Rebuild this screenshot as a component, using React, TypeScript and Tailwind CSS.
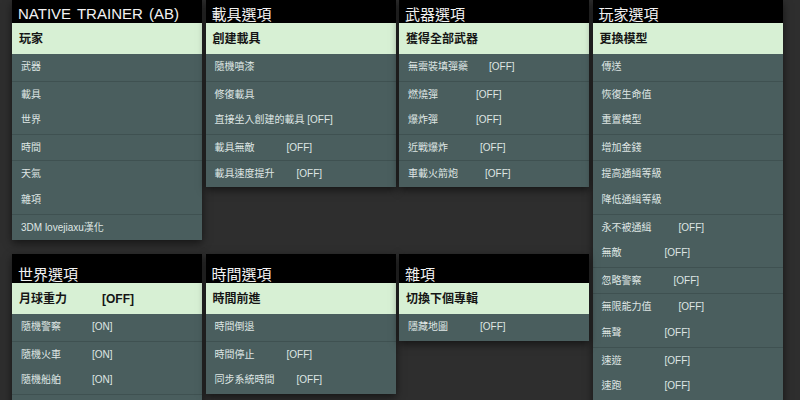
import React from "react";

type Item = {
  label: string;
  value?: string;
  w?: string; // ancho de la etiqueta antes del valor
  sep?: boolean; // línea tenue arriba
};

interface PanelProps {
  title: string;
  items: Item[];
  tall?: boolean; // cabecera de la fila de abajo
  latin?: boolean;
  className?: string;
}

const Panel: React.FC<PanelProps> = ({ title, items, tall, latin, className }) => {
  const [first, ...rest] = items;
  return (
    <div className={`w-[190px] bg-[#4a5e5e] shadow-[0_3px_8px_rgba(0,0,0,0.55)] ${className ?? ""}`}>
      {/* Cabecera */}
      <div className={`flex items-end bg-black pl-[6px] ${tall ? "h-[29px]" : "h-[23px]"}`}>
        <span
          className={`leading-none text-[#f2f2f2] ${
            latin ? "text-[15px] [word-spacing:2px] pb-[2px]" : "text-[15px] pb-[1px]"
          }`}
        >
          {title}
        </span>
      </div>
      {/* Opción seleccionada */}
      <div className="flex h-[31px] items-center bg-[#d7f0d4] pl-[7px] text-[12px] font-semibold text-[#151515]">
        <span className={first.w ?? ""}>{first.label}</span>
        {first.value && <span>{first.value}</span>}
      </div>
      {rest.map((it, i) => (
        <div
          key={i}
          className={`flex h-[26.6px] items-start pt-[7px] pl-[9px] text-[10px] leading-[12px] text-[#dfe6e4] ${
            it.sep ? "border-t border-[#3f5151]" : ""
          }`}
        >
          <span className={it.w ?? ""}>{it.label}</span>
          {it.value && <span>{it.value}</span>}
        </div>
      ))}
    </div>
  );
};

const main: Item[] = [
  { label: "玩家" },
  { label: "武器" },
  { label: "載具", sep: true },
  { label: "世界" },
  { label: "時間", sep: true },
  { label: "天氣", sep: true },
  { label: "雜項" },
  { label: "3DM lovejiaxu漢化", sep: true },
];

const vehiculos: Item[] = [
  { label: "創建載具" },
  { label: "隨機噴漆" },
  { label: "修復載具", sep: true },
  { label: "直接坐入創建的載具 [OFF]" },
  { label: "載具無敵", value: "[OFF]", w: "w-[72px]", sep: true },
  { label: "載具速度提升", value: "[OFF]", w: "w-[82px]", sep: true },
];

const armas: Item[] = [
  { label: "獲得全部武器" },
  { label: "無需裝填彈藥", value: "[OFF]", w: "w-[81px]" },
  { label: "燃燒彈", value: "[OFF]", w: "w-[68px]", sep: true },
  { label: "爆炸彈", value: "[OFF]", w: "w-[68px]" },
  { label: "近戰爆炸", value: "[OFF]", w: "w-[72px]", sep: true },
  { label: "車載火箭炮", value: "[OFF]", w: "w-[77px]", sep: true },
];

const jugador: Item[] = [
  { label: "更換模型" },
  { label: "傳送" },
  { label: "恢復生命值", sep: true },
  { label: "重置模型" },
  { label: "增加金錢", sep: true },
  { label: "提高通緝等級", sep: true },
  { label: "降低通緝等級" },
  { label: "永不被通緝", value: "[OFF]", w: "w-[77px]", sep: true },
  { label: "無敵", value: "[OFF]", w: "w-[63px]" },
  { label: "忽略警察", value: "[OFF]", w: "w-[72px]", sep: true },
  { label: "無限能力值", value: "[OFF]", w: "w-[77px]", sep: true },
  { label: "無聲", value: "[OFF]", w: "w-[63px]" },
  { label: "速遊", value: "[OFF]", w: "w-[63px]", sep: true },
  { label: "速跑", value: "[OFF]", w: "w-[63px]" },
  { label: "" },
];

const mundo: Item[] = [
  { label: "月球重力", value: "[OFF]", w: "w-[83px]" },
  { label: "隨機警察", value: "[ON]", w: "w-[71px]" },
  { label: "隨機火車", value: "[ON]", w: "w-[71px]", sep: true },
  { label: "隨機船舶", value: "[ON]", w: "w-[71px]" },
  { label: "", sep: true },
];

const tiempo: Item[] = [
  { label: "時間前進" },
  { label: "時間倒退" },
  { label: "時間停止", value: "[OFF]", w: "w-[72px]", sep: true },
  { label: "同步系統時間", value: "[OFF]", w: "w-[82px]" },
];

const varios: Item[] = [
  { label: "切換下個專輯" },
  { label: "隱藏地圖", value: "[OFF]", w: "w-[72px]" },
];

export default function App() {
  return (
    <div
      className="h-[400px] w-[800px] overflow-hidden bg-[#2e2e2e]"
      style={{ fontFamily: '"Liberation Sans", "Noto Sans CJK TC", sans-serif' }}
    >
      <div className="grid grid-cols-[190px_190px_190px_190px] grid-rows-[254px_auto] items-start gap-x-[3.5px] pl-[12px]">
        <Panel title="NATIVE TRAINER (AB)" items={main} latin />
        <Panel title="載具選項" items={vehiculos} />
        <Panel title="武器選項" items={armas} />
        <Panel title="玩家選項" items={jugador} className="row-span-2" />
        <Panel title="世界選項" items={mundo} tall />
        <Panel title="時間選項" items={tiempo} tall />
        <Panel title="雜項" items={varios} tall />
      </div>
    </div>
  );
}
